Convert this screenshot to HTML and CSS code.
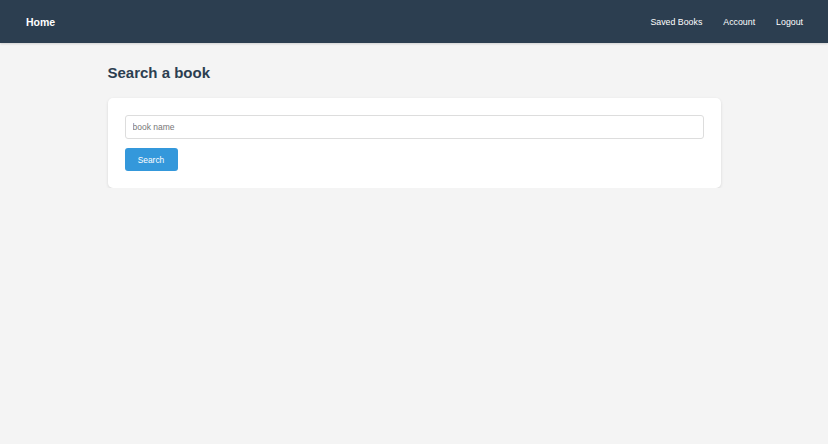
FILE: index.html
```html
<!DOCTYPE html>
<html lang="en">
<head>
    <meta charset="UTF-8">
    <meta name="viewport" content="width=device-width, initial-scale=1.0">
    <title>Search a book</title>
    <link rel="stylesheet" href="styles.css">
</head>
<body>
    <nav class="navbar">
        <a class="brand" href="#">Home</a>
        <div class="nav-links">
            <a href="#">Saved Books</a>
            <a href="#">Account</a>
            <a href="#">Logout</a>
        </div>
    </nav>

    <main class="page">
        <h2 class="page-title">Search a book</h2>
        <div class="card">
            <input type="text" class="search-input" placeholder="book name">
            <button class="search-button">Search</button>
        </div>
    </main>
</body>
</html>
```

FILE: styles.css
```css
body {
    margin: 0;
    font-family: "Liberation Sans", Arial, sans-serif;
    background-color: #f4f4f4;
}

.navbar {
    display: flex;
    justify-content: space-between;
    align-items: center;
    height: 43px;
    padding: 0 25px 0 26px;
    background-color: #2c3e50;
    box-shadow: 0 1px 2px rgba(0, 0, 0, 0.15);
}

.brand {
    color: #ffffff;
    font-weight: bold;
    font-size: 10.5px;
    text-decoration: none;
}

.nav-links {
    display: flex;
    gap: 21px;
}

.nav-links a {
    color: #ffffff;
    font-size: 8.8px;
    text-decoration: none;
}

.page {
    width: 613px;
    margin: 0 auto;
}

.page-title {
    color: #2c3e50;
    font-size: 15px;
    margin: 21px 0 17px;
}

.card {
    display: flex;
    flex-direction: column;
    align-items: flex-start;
    gap: 9px;
    background-color: #ffffff;
    border-radius: 5px;
    padding: 17px;
    box-shadow: 0 1px 3px rgba(0, 0, 0, 0.12);
}

.search-input {
    box-sizing: border-box;
    width: 100%;
    height: 24px;
    padding: 0 7px;
    border: 1px solid #dddddd;
    border-radius: 3px;
    font-family: inherit;
    font-size: 8.5px;
    color: #333333;
}

.search-input::placeholder {
    color: #777777;
}

.search-button {
    box-sizing: border-box;
    width: 53px;
    height: 23px;
    border: none;
    border-radius: 3px;
    background-color: #3498db;
    color: #ffffff;
    font-family: inherit;
    font-size: 8.4px;
    cursor: pointer;
}
```
